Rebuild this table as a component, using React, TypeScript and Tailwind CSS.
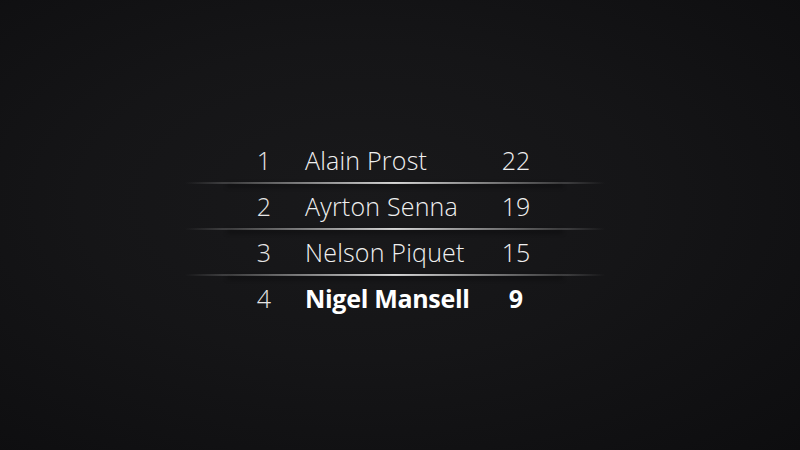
import {FC} from 'react';

type Standing = {pos: number; name: string; points: number; highlight?: boolean};

const standings: Standing[] = [
  {pos: 1, name: 'Alain Prost', points: 22},
  {pos: 2, name: 'Ayrton Senna', points: 19},
  {pos: 3, name: 'Nelson Piquet', points: 15},
  {pos: 4, name: 'Nigel Mansell', points: 9, highlight: true},
];

const Divider: FC = () => (
  <div className="relative h-[2px] w-full">
    <div className="absolute inset-0 bg-gradient-to-r from-transparent via-[#ededed] to-transparent" />
    <div className="absolute inset-x-[10%] top-[2px] h-[3px] bg-black/40 blur-[2px]" />
  </div>
);

const App: FC = () => {
  return (
    <div
      className="h-[450px] w-[800px] overflow-hidden bg-[radial-gradient(ellipse_at_45%_45%,#19191b_0%,#151517_45%,#0d0d0f_100%)] pl-[185px] pt-[138px] text-white"
      style={{fontFamily: '"Open Sans", Lato, sans-serif'}}>
      <div className="flex w-[420px] flex-col">
        {standings.map((s, idx) => (
          <div key={s.pos} className="flex flex-col">
            <div className="flex h-[44px] items-center text-[25px] leading-none">
              <span className="ml-[64px] w-[30px] text-center font-light text-[#e6e6e6]">{s.pos}</span>
              <span
                className={`ml-[26px] w-[191px] ${s.highlight ? 'font-bold tracking-[-0.3px] text-white' : 'font-light tracking-[0.2px] text-[#f0f0f0]'}`}>
                {s.name}
              </span>
              <span
                className={`w-[40px] text-center ${s.highlight ? 'font-bold text-white' : 'font-light text-[#f0f0f0]'}`}>
                {s.points}
              </span>
            </div>
            {idx < standings.length - 1 && <Divider />}
          </div>
        ))}
      </div>
    </div>
  );
};

export default App;
